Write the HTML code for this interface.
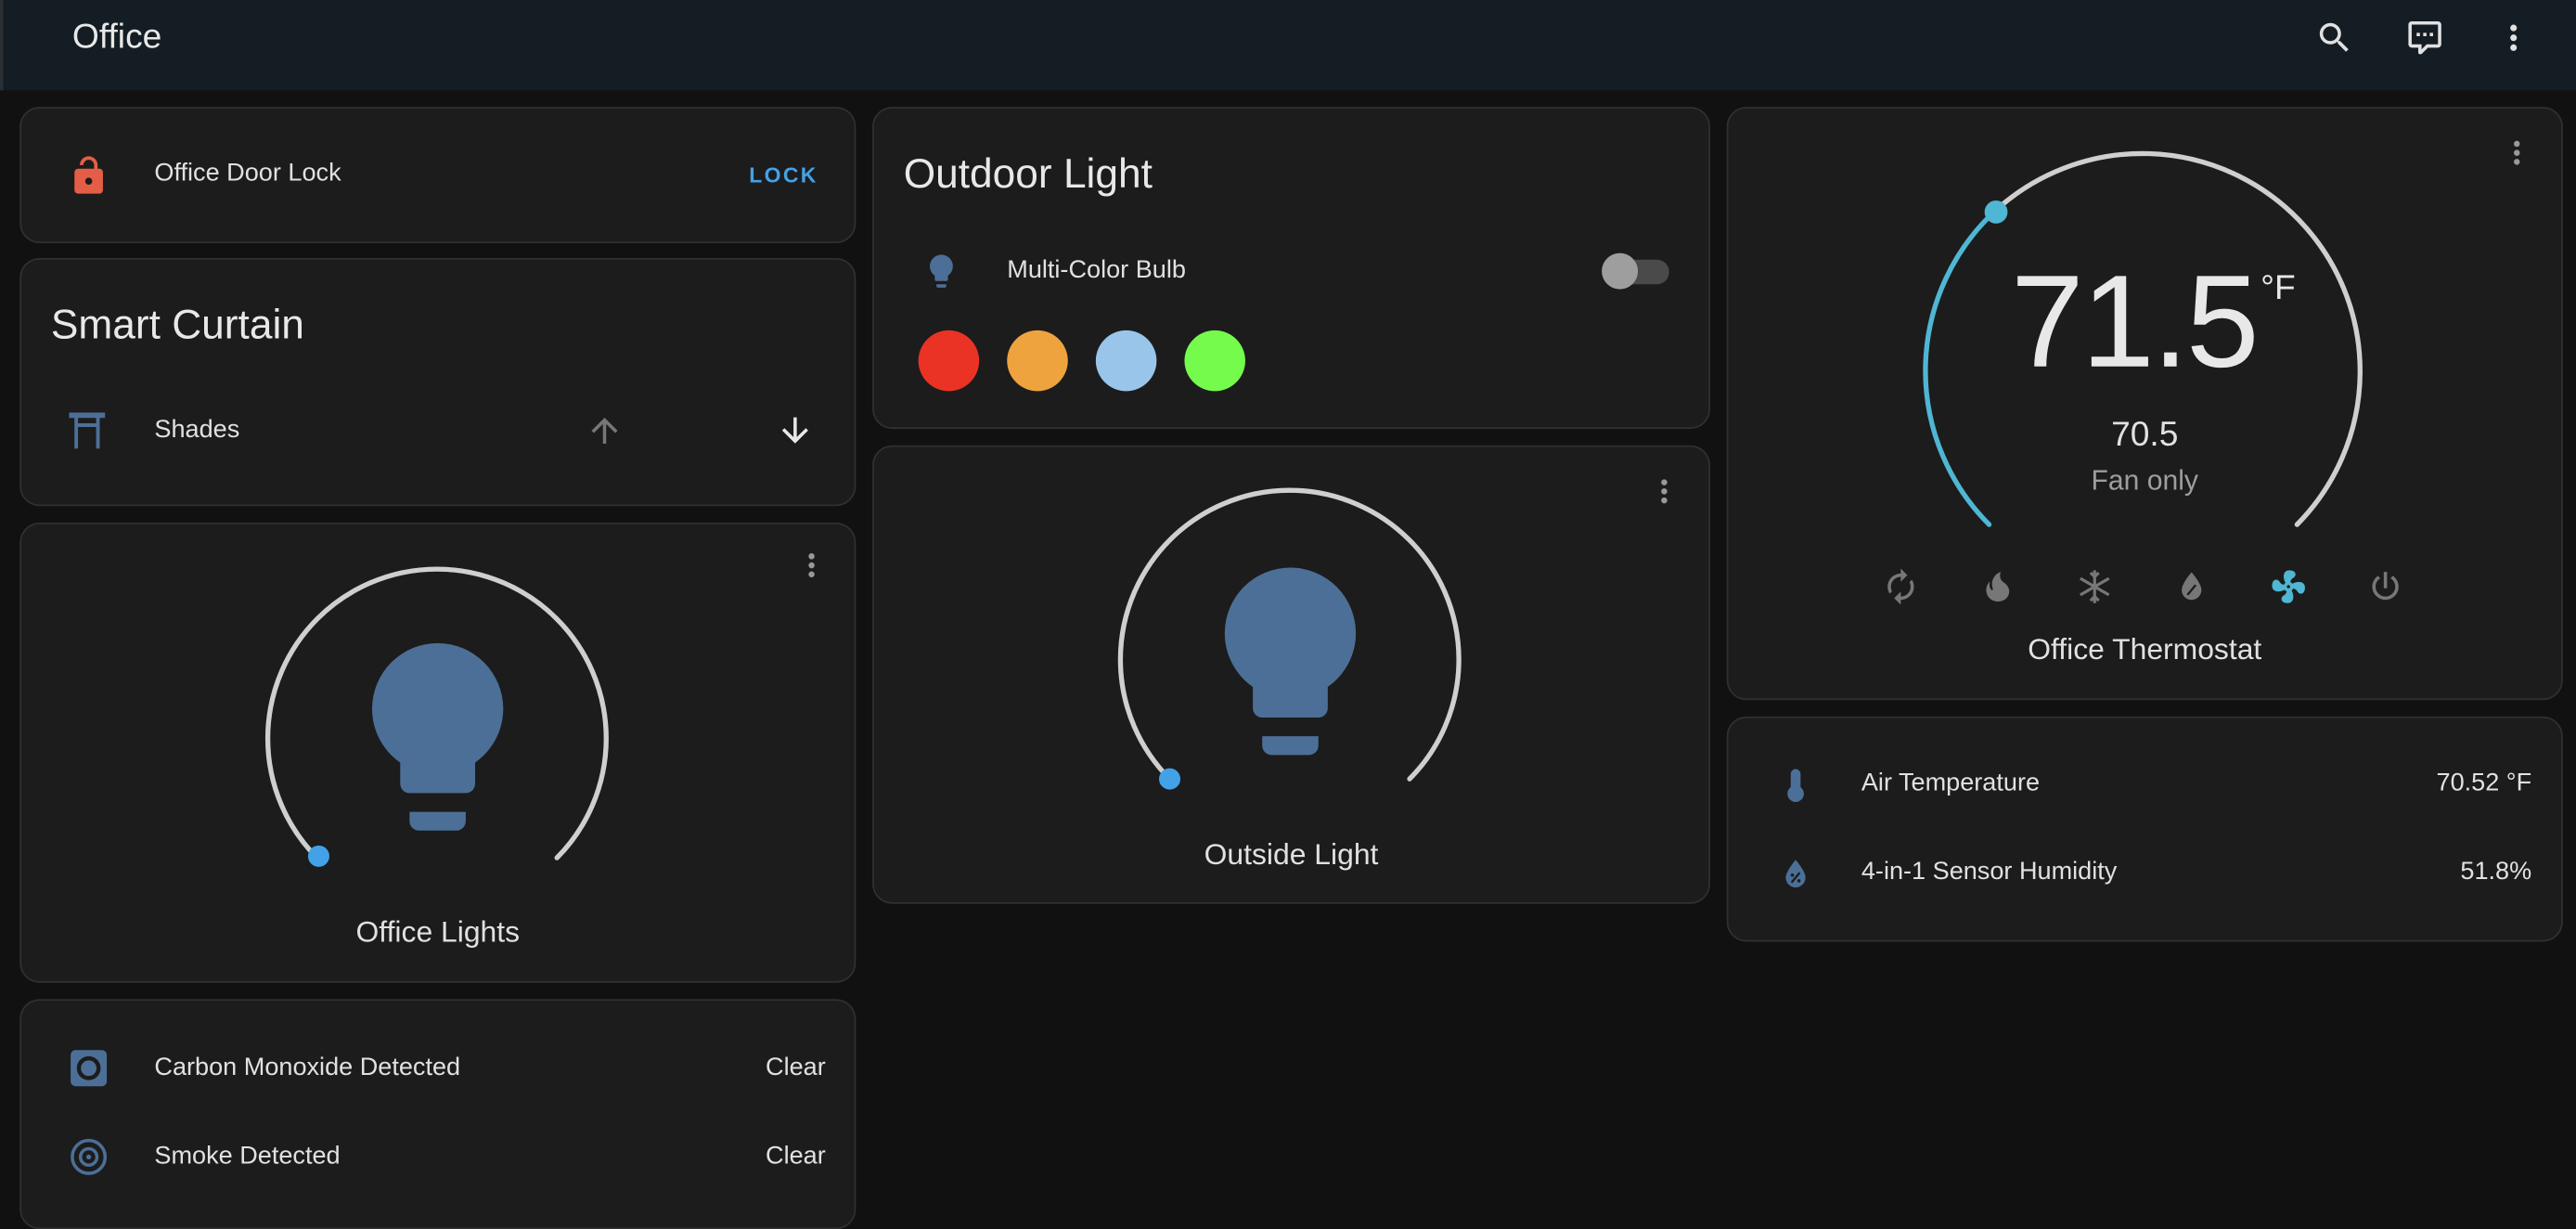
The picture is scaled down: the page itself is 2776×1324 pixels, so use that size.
<!DOCTYPE html>
<html><head><meta charset="utf-8"><style>
*{margin:0;padding:0;box-sizing:border-box}
html,body{width:2776px;height:1318px;overflow:hidden;background:#111111}
#w{position:absolute;left:0;top:0;width:1568px;height:745px;transform:scale(1.7704);transform-origin:0 0;font-family:"Liberation Sans",Roboto,sans-serif;color:#e1e1e1}
.hdr{position:absolute;left:0;top:0;width:1568px;height:55px;background:#141d23;border-left:2px solid #2a2f33}
.c{position:absolute;background:#1c1c1c;border:1px solid #303030;border-radius:12px}
.a{position:absolute;white-space:nowrap}
.t14{font-size:15.3px;color:#e1e1e1}
</style></head><body><div id="w">
<div class="hdr">
<div class="a" style="left:42px;top:11px;font-size:21px;color:#e8e8e8">Office</div>
<svg class="a" style="left:1407px;top:11px" width="24" height="24" viewBox="0 0 24 24"><path fill="#e1e1e1" d="M9.5,3A6.5,6.5 0 0,1 16,9.5C16,11.11 15.41,12.59 14.44,13.73L14.71,14H15.5L20.5,19L19,20.5L14,15.5V14.71L13.730,14.44C12.59,15.41 11.11,16 9.5,16A6.5,6.5 0 0,1 3,9.5A6.5,6.5 0 0,1 9.5,3M9.5,5C7,5 5,7 5,9.5C5,12 7,14 9.5,14C12,14 14,12 14,9.5C14,7 12,5 9.5,5Z"/></svg>
<svg class="a" style="left:1462px;top:11px" width="24" height="24" viewBox="0 0 24 24"><path fill="#e1e1e1" d="M9,22A1,1 0 0,1 8,21V18H4A2,2 0 0,1 2,16V4C2,2.89 2.9,2 4,2H20A2,2 0 0,1 22,4V16A2,2 0 0,1 20,18H13.9L10.2,21.71C10,21.9 9.75,22 9.5,22H9M10,16V19.08L13.08,16H20V4H4V16H10M17,11H15V9H17V11M13,11H11V9H13V11M9,11H7V9H9V11Z"/></svg>
<svg class="a" style="left:1516px;top:11px" width="24" height="24" viewBox="0 0 24 24"><path fill="#e1e1e1" d="M12,16A2,2 0 0,1 14,18A2,2 0 0,1 12,20A2,2 0 0,1 10,18A2,2 0 0,1 12,16M12,10A2,2 0 0,1 14,12A2,2 0 0,1 12,14A2,2 0 0,1 10,12A2,2 0 0,1 12,10M12,4A2,2 0 0,1 14,6A2,2 0 0,1 12,8A2,2 0 0,1 10,6A2,2 0 0,1 12,4Z"/></svg>
</div>

<!-- col1 -->
<div class="c" style="left:12px;top:65px;width:509px;height:83px">
<svg class="a" style="left:28px;top:28px" width="26" height="26" viewBox="0 0 24 24"><path fill="#e45e47" d="M18,8A2,2 0 0,1 20,10V20A2,2 0 0,1 18,22H6C4.89,22 4,21.1 4,20V10A2,2 0 0,1 6,8H15V6A3,3 0 0,0 12,3A3,3 0 0,0 9,6H7A5,5 0 0,1 12,1A5,5 0 0,1 17,6V8H18M12,17A2,2 0 0,0 14,15A2,2 0 0,0 12,13A2,2 0 0,0 10,15A2,2 0 0,0 12,17Z"/></svg>
<div class="a t14" style="left:81px;top:31px">Office Door Lock</div>
<div class="a" style="left:443px;top:33px;font-size:13px;letter-spacing:1.3px;color:#43a1e8;font-weight:bold">LOCK</div>
</div>
<div class="c" style="left:12px;top:157px;width:509px;height:151px">
<div class="a" style="left:18px;top:26px;font-size:25px;color:#e8e8e8">Smart Curtain</div>
<svg class="a" style="left:29px;top:93px" width="22" height="22" viewBox="0 0 20 20"><path fill="#4c6f97" d="M0,0H20V3H17V20H15V3H5V20H3V3H0Z M5,6H15V8H5Z"/></svg>
<div class="a t14" style="left:81px;top:95px">Shades</div>
<svg class="a" style="left:343px;top:92px" width="24" height="24" viewBox="0 0 24 24"><path fill="#777" d="M13,20H11V8L5.5,13.5L4.08,12.08L12,4.16L19.92,12.08L18.5,13.5L13,8V20Z"/></svg>
<svg class="a" style="left:459px;top:92px" width="24" height="24" viewBox="0 0 24 24"><path fill="#e8e8e8" d="M11,4H13V16L18.5,10.5L19.92,11.92L12,19.84L4.08,11.92L5.5,10.5L11,16V4Z"/></svg>
</div>
<div class="c" style="left:12px;top:318px;width:509px;height:280px">
<svg class="a" style="left:470px;top:14px" width="22" height="22" viewBox="0 0 24 24"><path fill="#999" d="M12,16A2,2 0 1,1 12,20A2,2 0 1,1 12,16M12,10A2,2 0 1,1 12,14A2,2 0 1,1 12,10M12,4A2,2 0 1,1 12,8A2,2 0 1,1 12,4Z"/></svg>
<div class="a t14" style="left:0;width:507px;text-align:center;top:238px;font-size:18px">Office Lights</div>
</div>
<div class="c" style="left:12px;top:608px;width:509px;height:140px">
<svg class="a" style="left:29px;top:29px" width="24" height="24" viewBox="0 0 24 24"><rect x="1" y="1" width="22" height="22" rx="3" fill="#4c6f97"/><circle cx="12" cy="12" r="6" fill="none" stroke="#1c1c1c" stroke-width="2.5"/></svg>
<div class="a t14" style="left:81px;top:32px">Carbon Monoxide Detected</div>
<div class="a t14" style="left:453px;top:32px">Clear</div>
<svg class="a" style="left:29px;top:83px" width="24" height="24" viewBox="0 0 24 24"><circle cx="12" cy="12" r="10" fill="none" stroke="#4c6f97" stroke-width="2"/><circle cx="12" cy="12" r="5" fill="none" stroke="#4c6f97" stroke-width="2"/><circle cx="12" cy="12" r="1.5" fill="#4c6f97"/></svg>
<div class="a t14" style="left:81px;top:86px">Smoke Detected</div>
<div class="a t14" style="left:453px;top:86px">Clear</div>
</div>

<!-- col2 -->
<div class="c" style="left:531px;top:65px;width:510px;height:196px">
<div class="a" style="left:18px;top:26px;font-size:25px;color:#e8e8e8">Outdoor Light</div>
<svg class="a" style="left:29px;top:87px" width="24" height="24" viewBox="0 0 24 24"><path fill="#4c6f97" d="M12,2A7,7 0 0,0 5,9C5,11.38 6.19,13.470 8,14.74V17A1,1 0 0,0 9,18H15A1,1 0 0,0 16,17V14.74C17.81,13.47 19,11.38 19,9A7,7 0 0,0 12,2M9,21A1,1 0 0,0 10,22H14A1,1 0 0,0 15,21V20H9V21Z"/></svg>
<div class="a t14" style="left:81px;top:90px">Multi-Color Bulb</div>
<div class="a" style="left:450px;top:92px;width:34px;height:15px;border-radius:8px;background:#4a4a4a"></div>
<div class="a" style="left:443px;top:88px;width:22px;height:22px;border-radius:50%;background:#9e9e9e"></div>
<div class="a" style="left:27px;top:135px;width:37px;height:37px;border-radius:50%;background:#ea3324"></div>
<div class="a" style="left:81px;top:135px;width:37px;height:37px;border-radius:50%;background:#eea33e"></div>
<div class="a" style="left:135px;top:135px;width:37px;height:37px;border-radius:50%;background:#99c5eb"></div>
<div class="a" style="left:189px;top:135px;width:37px;height:37px;border-radius:50%;background:#75fb4c"></div>
</div>
<div class="c" style="left:531px;top:271px;width:510px;height:279px">
<svg class="a" style="left:470px;top:16px" width="22" height="22" viewBox="0 0 24 24"><path fill="#999" d="M12,16A2,2 0 1,1 12,20A2,2 0 1,1 12,16M12,10A2,2 0 1,1 12,14A2,2 0 1,1 12,10M12,4A2,2 0 1,1 12,8A2,2 0 1,1 12,4Z"/></svg>
<div class="a t14" style="left:0;width:508px;text-align:center;top:238px;font-size:18px">Outside Light</div>
</div>

<!-- col3 -->
<div class="c" style="left:1051px;top:65px;width:509px;height:361px">
<svg class="a" style="left:469px;top:16px" width="22" height="22" viewBox="0 0 24 24"><path fill="#999" d="M12,16A2,2 0 1,1 12,20A2,2 0 1,1 12,16M12,10A2,2 0 1,1 12,14A2,2 0 1,1 12,10M12,4A2,2 0 1,1 12,8A2,2 0 1,1 12,4Z"/></svg>
<div class="a" style="left:172px;top:84px;font-size:80px;color:#e8e8e8;letter-spacing:-1.5px">71.5</div>
<div class="a" style="left:324px;top:98px;font-size:21px;color:#e8e8e8">°F</div>
<div class="a" style="left:0;width:507px;text-align:center;top:187px;font-size:21px;color:#e1e1e1">70.5</div>
<div class="a" style="left:0;width:507px;text-align:center;top:217px;font-size:17px;color:#9e9e9e">Fan only</div>
<div class="a t14" style="left:0;width:507px;text-align:center;top:319px;font-size:18px">Office Thermostat</div>
</div>
<div class="c" style="left:1051px;top:436px;width:509px;height:137px">
<svg class="a" style="left:29px;top:29px" width="24" height="24" viewBox="0 0 24 24"><path fill="#4c6f97" d="M15,13V5A3,3 0 0,0 9,5V13A5,5 0 1,0 15,13Z"/></svg>
<div class="a t14" style="left:81px;top:31px">Air Temperature</div>
<div class="a t14" style="right:18px;top:31px">70.52 °F</div>
<svg class="a" style="left:29px;top:83px" width="24" height="24" viewBox="0 0 24 24"><path fill="#4c6f97" d="M12,3.25C12,3.25 6,10 6,14C6,17.32 8.69,20 12,20A6,6 0 0,0 18,14C18,10 12,3.25 12,3.25Z"/><path stroke="#1c1c1c" stroke-width="1.3" d="M9.5,17L14.5,11"/><circle cx="10" cy="12.5" r="1" fill="#1c1c1c"/><circle cx="14" cy="16" r="1" fill="#1c1c1c"/></svg>
<div class="a t14" style="left:81px;top:85px">4-in-1 Sensor Humidity</div>
<div class="a t14" style="right:18px;top:85px">51.8%</div>
</div>

<svg class="a" style="left:0;top:0" width="1568" height="745">
<g fill="none" stroke-linecap="round" stroke-width="3">
<path stroke="#cfcfcf" d="M193,522 A103,103 0 1,1 339,522"/>
<path stroke="#cfcfcf" d="M712,474 A103,103 0 1,1 858,474"/>
<path stroke="#cfcfcf" d="M1214.4,128.4 A132.5,132.5 0 0,1 1398.2,319.2"/>
<path stroke="#4fb6d3" d="M1210.8,319.2 A132.5,132.5 0 0,1 1214.4,128.4"/>
</g>
<circle cx="194" cy="521" r="6.5" fill="#43a1e8"/>
<circle cx="712" cy="474" r="6.5" fill="#43a1e8"/>
<circle cx="1215" cy="129" r="7" fill="#4fb6d3"/>
<g fill="#4c6f97">
<path transform="translate(198,380) scale(5.7)" d="M12,2A7,7 0 0,0 5,9C5,11.38 6.19,13.47 8,14.74V17A1,1 0 0,0 9,18H15A1,1 0 0,0 16,17V14.74C17.81,13.47 19,11.38 19,9A7,7 0 0,0 12,2M9,21A1,1 0 0,0 10,22H14A1,1 0 0,0 15,21V20H9V21Z"/>
<path transform="translate(717,334) scale(5.7)" d="M12,2A7,7 0 0,0 5,9C5,11.38 6.19,13.47 8,14.74V17A1,1 0 0,0 9,18H15A1,1 0 0,0 16,17V14.74C17.81,13.47 19,11.38 19,9A7,7 0 0,0 12,2M9,21A1,1 0 0,0 10,22H14A1,1 0 0,0 15,21V20H9V21Z"/>
</g>
<g transform="translate(1145,345)">
<path fill="#777" d="M12,6V9L16,5L12,1V4A8,8 0 0,0 4,12C4,13.57 4.46,15.03 5.24,16.26L6.7,14.8C6.25,13.97 6,13 6,12A6,6 0 0,1 12,6M18.76,7.74L17.3,9.2C17.74,10.04 18,11 18,12A6,6 0 0,1 12,18V15L8,19L12,23V20A8,8 0 0,0 20,12C20,10.43 19.54,8.97 18.76,7.74Z"/>
</g>
<g transform="translate(1204,345)"><path fill="#777" d="M17.66,11.2C17.43,10.9 17.15,10.64 16.89,10.38C16.22,9.78 15.46,9.35 14.82,8.72C13.33,7.26 13,4.85 13.95,3C13,3.23 12.17,3.75 11.46,4.32C8.87,6.4 7.85,10.07 9.07,13.22C9.11,13.32 9.15,13.42 9.15,13.55C9.15,13.77 9,13.97 8.8,14.05C8.57,14.15 8.33,14.09 8.14,13.93C8.08,13.88 8.04,13.83 8,13.76C6.87,12.33 6.69,10.28 7.45,8.64C5.78,10 4.87,12.3 5,14.47C5.06,14.97 5.12,15.47 5.29,15.97C5.43,16.57 5.7,17.17 6,17.7C7.08,19.43 8.95,20.67 10.96,20.92C13.1,21.19 15.39,20.8 17.03,19.32C18.86,17.66 19.5,15 18.56,12.72L18.43,12.46C18.220,12 17.66,11.2 17.66,11.2Z"/></g>
<g transform="translate(1263,345)" stroke="#777" stroke-width="1.8" fill="none"><path d="M12,2V22M3.3,7L20.7,17M3.3,17L20.7,7M9.5,3.5L12,6L14.5,3.5M9.5,20.5L12,18L14.5,20.5"/></g>
<g transform="translate(1322,345)"><path fill="#777" d="M12,3.25C12,3.25 6,10 6,14C6,17.32 8.69,20 12,20A6,6 0 0,0 18,14C18,10 12,3.25 12,3.25Z"/><path stroke="#1c1c1c" stroke-width="1.3" d="M9.5,17L14.5,11"/></g>
<g transform="translate(1381,345)"><path fill="#4fb6d3" d="M12,11A1,1 0 0,0 11,12A1,1 0 0,0 12,13A1,1 0 0,0 13,12A1,1 0 0,0 12,11M12.5,2C17,2 17.11,5.57 14.75,6.75C13.76,7.24 13.32,8.29 13.13,9.22C13.61,9.42 14.03,9.73 14.35,10.13C18.05,8.13 22.03,8.92 22.03,12.5C22.03,17 18.46,17.1 17.28,14.73C16.78,13.74 15.72,13.3 14.79,13.11C14.59,13.59 14.28,14 13.88,14.34C15.87,18.03 15.08,22 11.5,22C7,22 6.91,18.42 9.27,17.24C10.25,16.75 10.69,15.71 10.89,14.79C10.4,14.59 9.97,14.27 9.65,13.87C5.96,15.85 2,15.07 2,11.5C2,7 5.56,6.89 6.74,9.26C7.24,10.25 8.29,10.68 9.22,10.87C9.41,10.39 9.73,9.970 10.14,9.65C8.15,5.96 8.94,2 12.5,2Z"/></g>
<g transform="translate(1440,345)"><path fill="#777" d="M16.56,5.44L15.11,6.89C16.84,7.94 18,9.83 18,12A6,6 0 0,1 12,18A6,6 0 0,1 6,12C6,9.83 7.16,7.94 8.88,6.88L7.44,5.44C5.36,6.88 4,9.28 4,12A8,8 0 0,0 12,20A8,8 0 0,0 20,12C20,9.28 18.64,6.88 16.56,5.44M13,3H11V13H13"/></g>
</svg>
</div></body></html>
